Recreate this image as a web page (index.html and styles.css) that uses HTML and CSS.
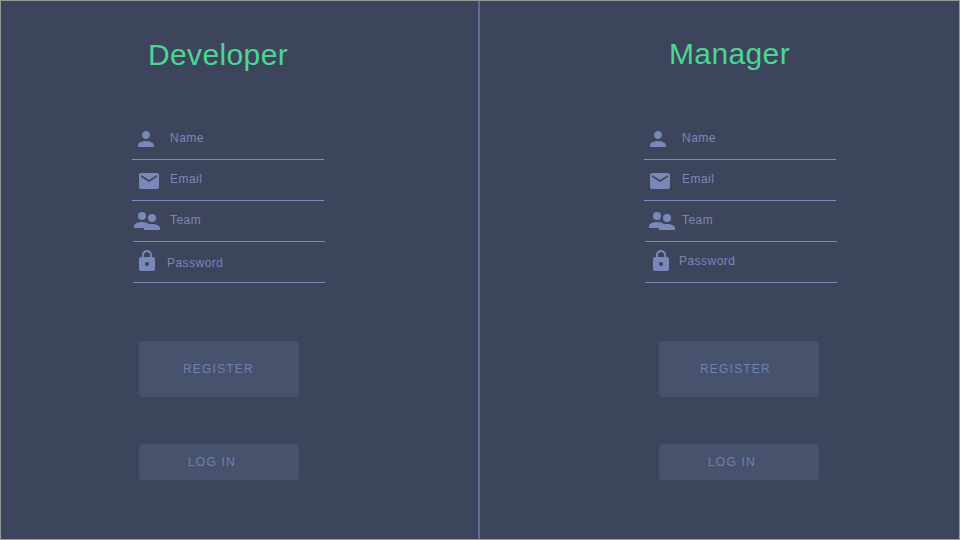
FILE: index.html
```
<!DOCTYPE html>
<html lang="en">
<head>
<meta charset="utf-8">
<title>Register</title>
<link rel="stylesheet" href="styles.css">
</head>
<body>
<svg width="0" height="0" class="defs">
  <symbol id="person" viewBox="0 0 24 24"><path d="M12 12c2.210 0 4-1.790 4-4s-1.790-4-4-4-4 1.790-4 4 1.790 4 4 4zm0 2c-2.670 0-8 1.340-8 4v2h16v-2c0-2.660-5.330-4-8-4z"/></symbol>
  <symbol id="mail" viewBox="0 0 24 24"><path d="M20 4H4c-1.100 0-1.990.9-1.990 2L2 18c0 1.100.9 2 2 2h16c1.100 0 2-.9 2-2V6c0-1.100-.9-2-2-2zm0 4l-8 5-8-5V6l8 5 8-5v2z"/></symbol>
  <symbol id="team" viewBox="0 0 26 18"><circle cx="8" cy="4" r="4"/><circle cx="18" cy="6" r="4"/><path d="M0 16v-2c0-2.700 5-4 8-4 2.300 0 5.700.7 7.300 2.200.9-.1 1.800-.2 2.700-.2 3 0 8 1.300 8 4v2H10v-2z"/></symbol>
  <symbol id="lock" viewBox="0 0 24 24"><path d="M18 8h-1V6c0-2.760-2.240-5-5-5S7 3.240 7 6v2H6c-1.100 0-2 .9-2 2v10c0 1.100.9 2 2 2h12c1.100 0 2-.9 2-2V10c0-1.100-.9-2-2-2zm-6 9c-1.100 0-2-.9-2-2s.9-2 2-2 2 .9 2 2-.9 2-2 2zm3.100-9H8.900V6c0-1.710 1.390-3.100 3.100-3.100s3.100 1.390 3.100 3.100v2z"/></symbol>
</svg>
<main class="screen">
  <section class="panel developer">
    <h1>Developer</h1>
    <form class="fields">
      <div class="field"><span class="icon"><svg class="person"><use href="#person"/></svg></span><label>Name</label></div>
      <div class="field"><span class="icon"><svg class="mail"><use href="#mail"/></svg></span><label>Email</label></div>
      <div class="field shifted"><span class="icon"><svg class="team"><use href="#team"/></svg></span><label>Team</label></div>
      <div class="field shifted"><span class="icon"><svg class="lock"><use href="#lock"/></svg></span><label class="password">Password</label></div>
    </form>
    <button class="register">REGISTER</button>
    <button class="login">LOG IN</button>
  </section>
  <section class="panel manager">
    <h1>Manager</h1>
    <form class="fields">
      <div class="field"><span class="icon"><svg class="person"><use href="#person"/></svg></span><label>Name</label></div>
      <div class="field"><span class="icon"><svg class="mail"><use href="#mail"/></svg></span><label>Email</label></div>
      <div class="field shifted"><span class="icon"><svg class="team"><use href="#team"/></svg></span><label>Team</label></div>
      <div class="field shifted"><span class="icon"><svg class="lock"><use href="#lock"/></svg></span><label class="password">Password</label></div>
    </form>
    <button class="register">REGISTER</button>
    <button class="login">LOG IN</button>
  </section>
</main>
</body>
</html>
```
FILE: styles.css
```
* { box-sizing: border-box; }
body {
  margin: 0;
  font-family: "Liberation Sans", Arial, sans-serif;
  color: #7888b8;
}
.defs { display: none; }
.screen {
  display: flex;
  width: 960px;
  height: 540px;
  border: 1px solid #979797;
  background: #3d455c;
}
.panel {
  display: flex;
  flex-direction: column;
  align-items: flex-start;
}
.developer {
  width: 479px;
  border-right: 2px solid #5e6c96;
}
.manager { flex: 1; }
h1 {
  height: 36px;
  margin: 36px 0 46px 147px;
  font-size: 30px;
  line-height: 36px;
  font-weight: 400;
  letter-spacing: .37px;
  color: #4bd694;
}
.manager h1 {
  margin: 35px 0 47px 189px;
}
.fields {
  width: 192px;
  margin-left: 131px;
}
.manager .fields { margin-left: 164px; }
.field {
  display: flex;
  height: 41px;
  border-bottom: 1px solid #7888b8;
}
.shifted { transform: translateX(1px); }
.icon { width: 38px; flex: none; }
.shifted .icon { width: 37px; }
svg {
  display: block;
  width: 24px;
  height: 24px;
  fill: #7888b8;
}
.person { margin: 8px 0 0 2px; }
.mail { margin: 9px 0 0 5px; }
.team { width: 26px; height: 18px; margin: 11px 0 0 1px; }
.lock { margin: 7px 0 0 2px; }
.manager .mail { margin-left: 4px; }
.manager .team { margin-left: 4px; }
.manager .lock { margin-left: 4px; }
label {
  margin-top: 11px;
  font-size: 12px;
  line-height: 16px;
  letter-spacing: .46px;
}
.password { margin: 13px 0 0 -3px; }
.manager .password { margin-top: 11px; }
button {
  width: 160px;
  margin-left: 138px;
  padding: 0 0 0 44px;
  border: 0;
  border-radius: 4px;
  background: #47536c;
  color: #7080b2;
  font: 12px "Liberation Sans", Arial, sans-serif;
  letter-spacing: 1.2px;
  text-align: left;
}
.manager button { margin-left: 179px; }
.register { height: 56px; margin-top: 58px; }
.manager .register { padding-left: 41px; }
.login { height: 36px; margin-top: 47px; padding-left: 49px; }
.manager .login { padding-left: 49px; }
```
